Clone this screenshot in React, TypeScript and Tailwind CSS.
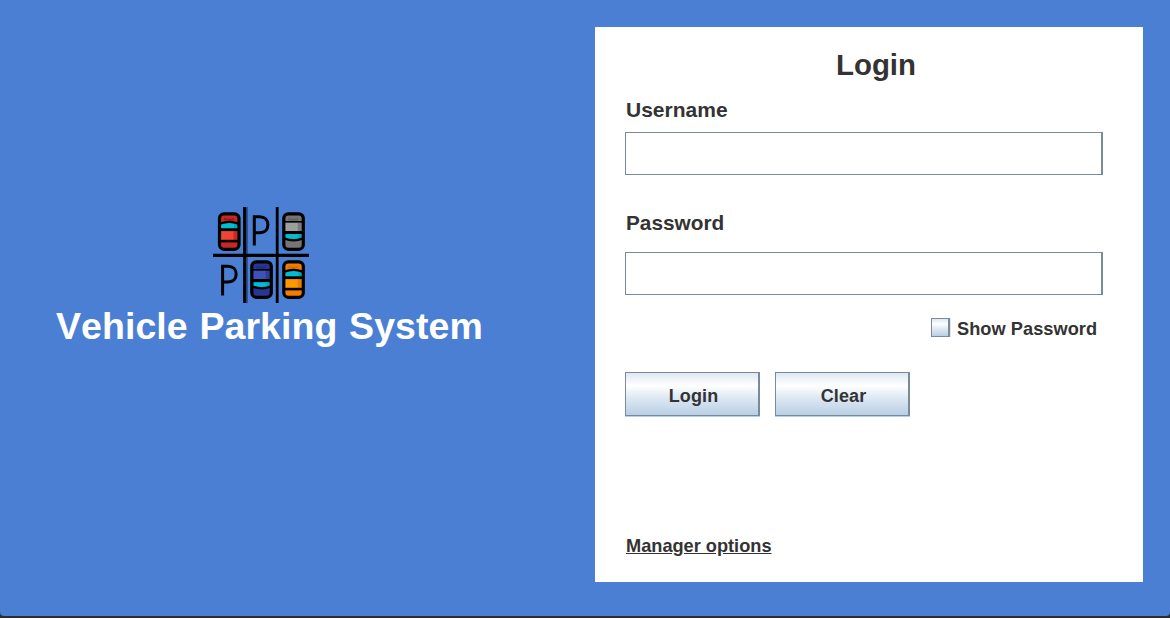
import { useState } from "react";

type CarProps = {
  x: number;
  y: number;
  body: string;
  roof: string;
  shade: string;
  flipped?: boolean;
};

function Car({ x, y, body, roof, shade, flipped }: CarProps) {
  return (
    <g transform={`translate(${x} ${y})`}>
      <rect x="1.5" y="1.5" width="19.5" height="35.5" rx="4" fill={body} />
      <path d="M6 6.5q5 2 10 0" stroke={shade} strokeWidth="2" />
      {flipped ? (
        <>
          <rect x="2.5" y="10" width="17" height="10" fill={roof} />
          <rect x="15.5" y="10" width="4" height="10" fill={shade} opacity=".55" />
          <path d="M3 22h16.5v4q-8.2 3-16.5 0z" fill="#00bcd4" />
          <path d="M16 22h3.5v4H16z" fill="#00a5bd" />
          <path d="M2 9.5h18.5" stroke="#000" strokeWidth="1.6" />
          <path d="M2 20.2h18.5" stroke="#000" strokeWidth="3" />
          <path d="M2 26.2q9.2 3.6 18.5 0" fill="none" stroke="#000" strokeWidth="2.4" />
        </>
      ) : (
        <>
          <path d="M3 16.5V12q8.2-3 16.5 0v4.5z" fill="#00bcd4" />
          <path d="M16 11.5h3.5v5H16z" fill="#00a5bd" />
          <rect x="2.5" y="18" width="17" height="10" fill={roof} />
          <rect x="15.5" y="18" width="4" height="10" fill={shade} opacity=".55" />
          <path d="M2 11.4q9.2-3.6 18.5 0" fill="none" stroke="#000" strokeWidth="2.4" />
          <path d="M2 17.4h18.5" stroke="#000" strokeWidth="2.8" />
          <path d="M2 28.8h18.5" stroke="#000" strokeWidth="2.6" />
        </>
      )}
      <rect x="1.5" y="1.5" width="19.5" height="35.5" rx="4.5" fill="none" stroke="#000" strokeWidth="3.2" />
    </g>
  );
}

function ParkingLogo() {
  return (
    <svg className="h-24 w-24" viewBox="0 0 96 96" fill="none">
      <path d="M33.4 0v96" stroke="#23427a" strokeWidth="2.6" />
      <path d="M31.5 0v96M64.2 0v96" stroke="#000" strokeWidth="2.8" />
      <path d="M0 48.4h96" stroke="#000" strokeWidth="3.2" />
      <Car x={5} y={5.3} body="#c62828" roof="#f44336" shade="#a01515" />
      <Car x={69.3} y={5.3} body="#757575" roof="#9e9e9e" shade="#616161" flipped />
      <Car x={37.3} y={53.3} body="#283593" roof="#3f51b5" shade="#232e82" flipped />
      <Car x={69.3} y={53.3} body="#f57c00" roof="#ff9800" shade="#d96b00" />
      <path d="M41.3 38.4V9.8h5.2c5.6 0 8.4 3.4 8.4 7.9s-2.8 8-8.4 8h-5.2" stroke="#000" strokeWidth="3" />
      <path d="M9.6 88.4V59.2h5.2c5.6 0 8.4 3.4 8.4 7.9s-2.8 8-8.4 8H9.6" stroke="#000" strokeWidth="3" />
    </svg>
  );
}

const metal = "bg-[linear-gradient(180deg,#dde8f3_0%,#ffffff_30%,#dde8f3_60%,#b8cfe5_100%)]";

const inputClass =
  "block h-[43px] w-[478px] border border-r-2 border-[#7a8a99] bg-white px-2 text-lg outline-none";

const buttonClass = `h-11 w-[135px] border border-r-2 border-[#7a8a99] pt-[3px] pl-[3px] text-lg leading-none font-bold tracking-[0.1px] shadow-[0_1px_0_#b8cfe5] ${metal}`;

export default function App() {
  const [username, setUsername] = useState("");
  const [password, setPassword] = useState("");
  const [visible, setVisible] = useState(false);

  return (
    <div className="h-[618px] w-[1170px] bg-[#2b2c30] font-['Liberation_Sans',Arial,sans-serif] text-[#333333] [font-kerning:none]">
      <div className="flex h-[616px] rounded-b-[4px] bg-[#4a7fd3] pt-[27px] pr-[27px]">
        <section className="flex w-[595px] flex-col pt-[180px]">
          <div className="pl-[213px]">
            <ParkingLogo />
          </div>
          <h1 className="pl-14 text-[37.5px] leading-[47px] font-bold tracking-[0.05px] whitespace-nowrap text-white [word-spacing:1.3px]">
            Vehicle Parking System
          </h1>
        </section>

        <main className="h-[555px] w-[548px] bg-white pl-[30px] font-bold">
          <h2 className="pt-5 pl-[211px] text-[29.4px] leading-9">Login</h2>
          <label htmlFor="username" className="mt-[15px] block pl-px text-[21px] leading-6">
            Username
          </label>
          <div className="pt-[10px]">
            <input id="username" className={inputClass} value={username} onChange={(e) => setUsername(e.target.value)} />
          </div>
          <label htmlFor="password" className="mt-9 block pl-px text-[20.8px] leading-6">
            Password
          </label>
          <div className="pt-[17px]">
            <input
              id="password"
              type={visible ? "text" : "password"}
              className={inputClass}
              value={password}
              onChange={(e) => setPassword(e.target.value)}
            />
          </div>
          <label className="mt-[23px] flex h-6 items-center pl-[306px] text-[18.2px] tracking-[0.05px]">
            <input
              type="checkbox"
              checked={visible}
              onChange={(e) => setVisible(e.target.checked)}
              className={`mr-[7px] mb-[5px] h-[19px] w-[19px] appearance-none border border-r-2 border-[#7a8a99] shadow-[1px_0_0_#dde8f3] checked:bg-[#7a8a99] ${metal}`}
            />
            Show Password
          </label>
          <div className="mt-[30px] flex gap-[15px]">
            <button className={buttonClass}>Login</button>
            <button
              className={buttonClass}
              onClick={() => {
                setUsername("");
                setPassword("");
              }}
            >
              Clear
            </button>
          </div>
          <a className="mt-[118px] block pl-px text-[18.2px] leading-6 underline" href="#manager">
            Manager options
          </a>
        </main>
      </div>
    </div>
  );
}
